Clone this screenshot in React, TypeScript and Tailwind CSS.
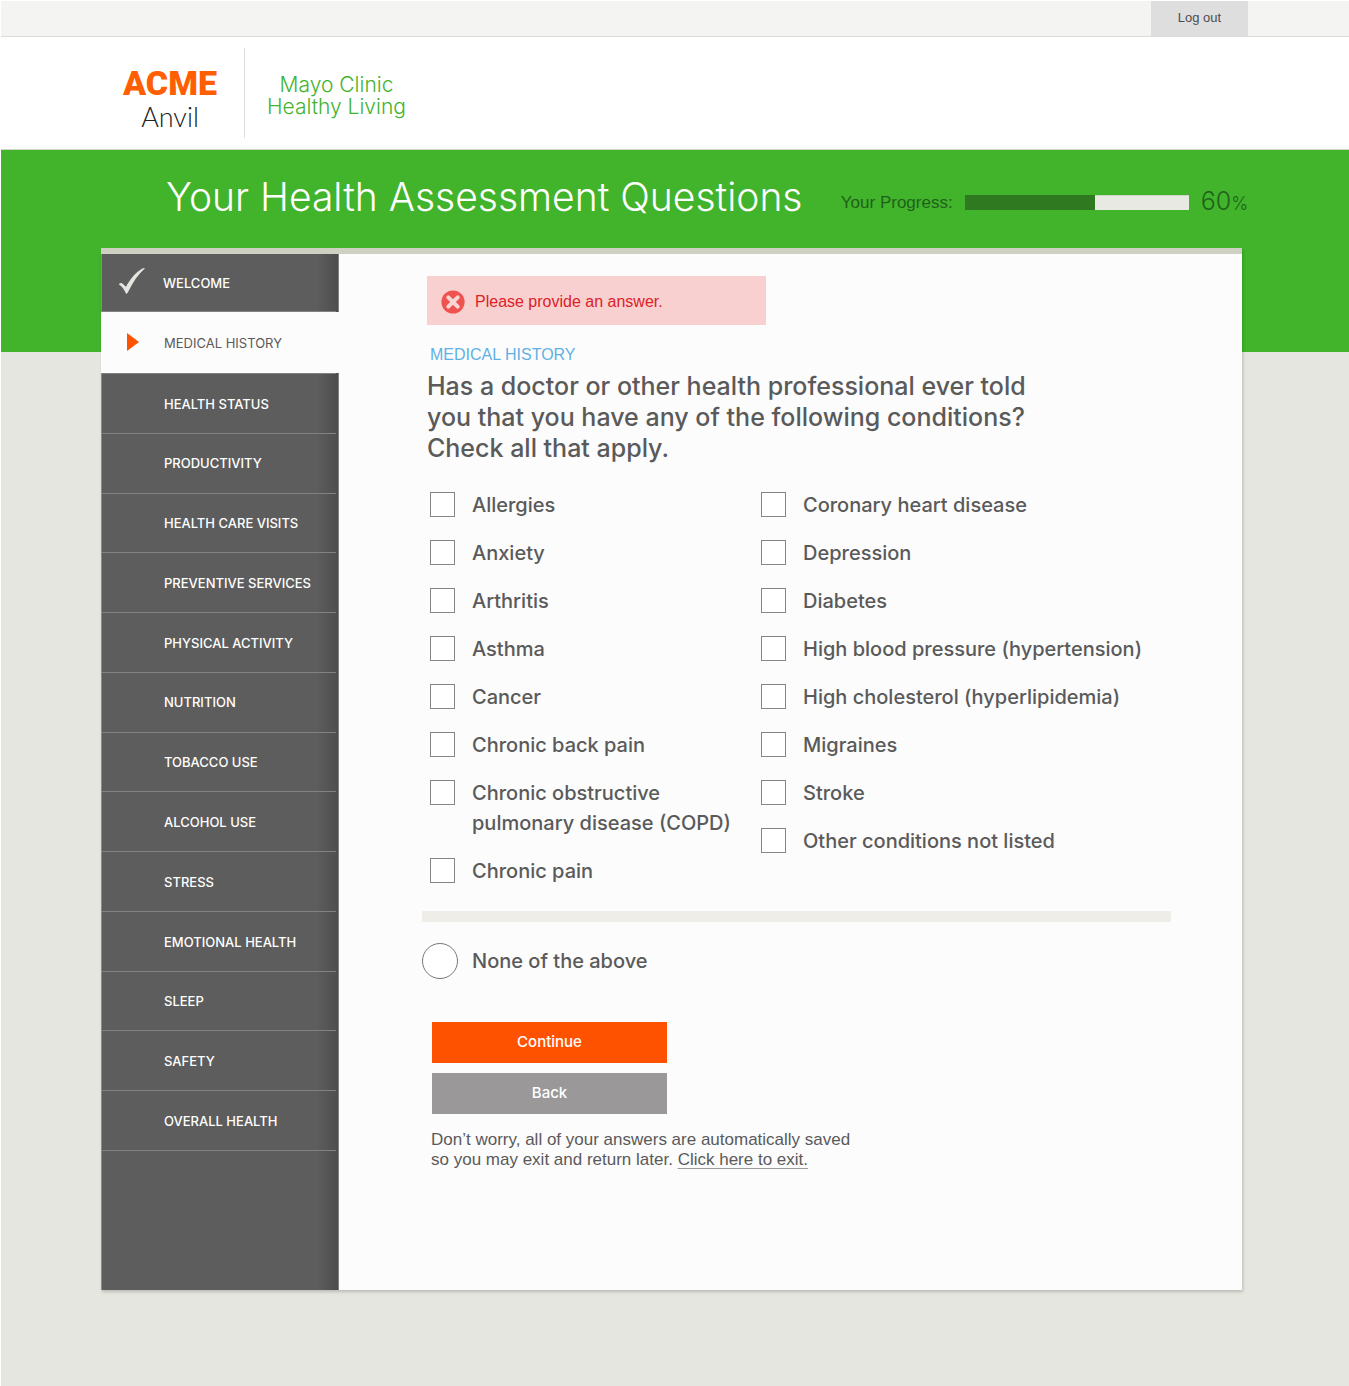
import { useState } from "react";

const SECTIONS = [
  "Health Status",
  "Productivity",
  "Health Care Visits",
  "Preventive Services",
  "Physical Activity",
  "Nutrition",
  "Tobacco Use",
  "Alcohol Use",
  "Stress",
  "Emotional Health",
  "Sleep",
  "Safety",
  "Overall Health",
];

const LEFT_CONDITIONS = [
  "Allergies",
  "Anxiety",
  "Arthritis",
  "Asthma",
  "Cancer",
  "Chronic back pain",
  "Chronic obstructive pulmonary disease (COPD)",
  "Chronic pain",
];

const RIGHT_CONDITIONS = [
  "Coronary heart disease",
  "Depression",
  "Diabetes",
  "High blood pressure (hypertension)",
  "High cholesterol (hyperlipidemia)",
  "Migraines",
  "Stroke",
  "Other conditions not listed",
];

function CheckMark() {
  return (
    <svg viewBox="0 0 28 28" className="h-7 w-7" aria-hidden="true">
      <path
        d="M0.8 17.2C1.8 16 3 15.6 4 16.2L8 19.8C12.5 11.5 18 5 25 1.2L27.2 1C20.4 7 14.8 15.2 9.8 25.4L8.2 27C6.4 22.8 4.4 19.6 0.8 17.2Z"
        fill="#e6e6e0"
      />
    </svg>
  );
}

function ErrorIcon() {
  return (
    <svg viewBox="0 0 24 24" className="h-6 w-6 shrink-0" aria-hidden="true">
      <circle cx="12" cy="12" r="11.6" fill="#ef5350" />
      <path d="M7.3 7.3L16.7 16.7M16.7 7.3L7.3 16.7" stroke="#f9d6d6" strokeWidth="4" strokeLinecap="round" />
    </svg>
  );
}

function TopBar() {
  return (
    <div className="flex h-[37px] justify-end border-t border-b border-t-white border-b-[#dcdcd9] bg-[#f4f4f2] pr-[101px]">
      <button type="button" className="w-[97px] bg-[#dedede] pb-[2px] text-[13px] text-[#4d4d4d]">
        Log out
      </button>
    </div>
  );
}

function Header() {
  return (
    <header className="flex h-[113px] border-b border-[#cfd6c6] bg-white pt-[11px] pl-[124px]">
      <div className="flex w-[90px] flex-col items-center pt-[15px]">
        <span className="font-[Roboto] text-[34px] leading-[40px] font-black text-[#ff5f00]">ACME</span>
        <span className="font-[Lato] text-[27px] leading-[28px] font-light text-[#222]">Anvil</span>
      </div>
      <div className="ml-[29px] h-[90px] w-px bg-[#dfdfdc]" />
      <p className="ml-[22px] pt-[26px] text-center font-[Inter] text-[21px] leading-[22px] font-light text-[#43b32e]">
        Mayo Clinic
        <br />
        Healthy Living
      </p>
    </header>
  );
}

function Banner() {
  return (
    <div className="bg-[#41b42b] pb-[104px]">
      <div className="flex h-[98px] items-center justify-between pr-[101px] pb-[4px] pl-[165px]">
        <h1 className="font-[Inter] text-[39px] leading-[48px] font-light text-white">Your Health Assessment Questions</h1>
        <div className="flex items-center gap-3 pt-[11px] text-[#20611a]">
          <span id="progress-label" className="text-[17px] leading-6">
            Your Progress:
          </span>
          <div
            role="progressbar"
            aria-labelledby="progress-label"
            aria-valuenow={60}
            className="h-[15px] w-[224px] border-t border-[#cfd6c6] bg-[#e9e9e4]"
          >
            <div className="-mt-px h-[15px] w-[58%] bg-[#2f7a21]" />
          </div>
          <span className="font-[Inter] text-[25px] leading-6 font-light">
            60<span className="text-[18px]">%</span>
          </span>
        </div>
      </div>
    </div>
  );
}

function Sidebar() {
  return (
    <nav
      aria-label="Assessment sections"
      className="w-[238px] shrink-0 bg-[linear-gradient(to_right,#8c8c8c_1px,#5d5d5d_1px,#5d5d5d_calc(100%-22px),#4d4d4d_calc(100%-1px),#7f7f7f_calc(100%-1px))] font-[Inter] text-[13px] uppercase"
    >
      <a href="#welcome" className="mr-[3px] ml-px flex h-[58px] items-center border-b border-[#828282] pt-[2px] font-medium text-white">
        <span className="flex w-[61px] justify-start pb-[6px] pl-4">
          <CheckMark />
        </span>
        Welcome
      </a>
      <a href="#medical-history" aria-current="step" className="flex h-[61px] items-center bg-[#fcfcfc] pt-[2px] text-[#5a5a5a]">
        <span className="flex w-[63px] pb-[4px] pl-[26px]">
          <svg viewBox="0 0 12 18" className="h-[18px] w-3" aria-hidden="true">
            <path d="M0 0L12 9L0 18Z" fill="#ff5200" />
          </svg>
        </span>
        Medical History
      </a>
      <ul className="mr-[3px] ml-px flex h-[778px] flex-col border-t border-[#828282]">
        {SECTIONS.map((name) => (
          <li key={name} className="flex-1 border-b border-[#828282]">
            <a href="#section" className="flex h-full items-center pt-[2px] pl-[62px] font-medium text-white">
              {name}
            </a>
          </li>
        ))}
      </ul>
    </nav>
  );
}

function ConditionList({ items }: { items: string[] }) {
  return (
    <ul className="flex flex-col gap-[18px]">
      {items.map((name) => (
        <li key={name}>
          <label className="flex items-start gap-[17px]">
            <input
              type="checkbox"
              className="mt-[2px] h-[25px] w-[25px] shrink-0 appearance-none border border-[#858585] bg-white checked:bg-[#ff5200]"
            />
            {name}
          </label>
        </li>
      ))}
    </ul>
  );
}

function Questionnaire() {
  const [none, setNone] = useState(false);
  return (
    <main className="min-w-0 flex-1 bg-[#fcfcfc] pt-[22px] pr-[71px] pb-[120px] pl-[83px] text-[#5a5a5a]">
      <div role="alert" className="ml-[5px] flex h-[49px] w-[339px] items-center gap-[10px] bg-[#f8d0d0] pt-[2px] pl-[14px] text-[16px] text-[#dd2127]">
        <ErrorIcon />
        Please provide an answer.
      </div>
      <form onSubmit={(e) => e.preventDefault()}>
        <h2 className="mt-[18px] ml-2 text-[16px] leading-6 text-[#5fb1e5]">MEDICAL HISTORY</h2>
        <p className="mt-[4px] ml-[5px] max-w-[640px] font-[Inter] text-[25px] leading-[31px] font-medium">
          Has a doctor or other health professional ever told you that you have any of the following conditions? Check all that apply.
        </p>
        <div className="mt-[26px] ml-2 flex font-[Inter] text-[20px] leading-[30px] font-medium">
          <div className="w-[331px] shrink-0 pr-6">
            <ConditionList items={LEFT_CONDITIONS} />
          </div>
          <ConditionList items={RIGHT_CONDITIONS} />
        </div>
        <div className="mt-[25px] h-[11px] bg-[#eeede7]" />
        <label className="mt-[21px] flex items-center gap-[14px] font-[Inter] text-[20px] leading-[30px] font-medium">
          <input
            type="radio"
            name="none"
            checked={none}
            onChange={() => setNone(true)}
            className="h-9 w-9 appearance-none rounded-full border border-[#777] bg-white checked:bg-[#ff5200]"
          />
          None of the above
        </label>
        <div className="mt-[43px] ml-[10px] flex w-[235px] flex-col gap-[10px] font-[Inter] text-[15px] font-medium text-white">
          <button type="submit" className="h-[41px] bg-[#ff5200]">
            Continue
          </button>
          <button type="button" className="h-[41px] bg-[#9a9899]">
            Back
          </button>
        </div>
        <p className="mt-[16px] ml-[9px] text-[17px] leading-5">
          Don’t worry, all of your answers are automatically saved
          <br />
          so you may exit and return later.{" "}
          <a href="#exit" className="underline decoration-[#9a9a9a] decoration-1 underline-offset-3">
            Click here to exit.
          </a>
        </p>
      </form>
    </main>
  );
}

export default function App() {
  return (
    <div className="min-h-screen border-l border-white bg-[#e6e6e0] pb-24 font-['Liberation_Sans',Arial,sans-serif]">
      <TopBar />
      <Header />
      <Banner />
      <div className="-mt-[104px] mr-[107px] ml-[100px] flex border-t-[6px] border-[#cfd0c4] shadow-[1px_2px_3px_rgba(0,0,0,0.18)]">
        <Sidebar />
        <Questionnaire />
      </div>
    </div>
  );
}
